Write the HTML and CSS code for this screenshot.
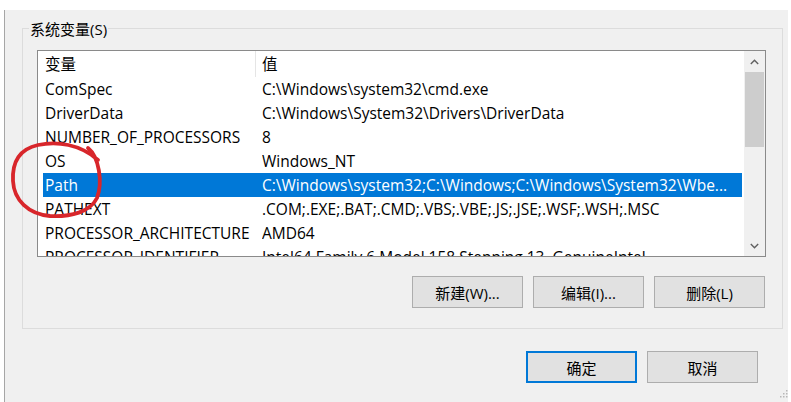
FILE: index.html
```html
<!DOCTYPE html>
<html lang="zh-CN">
<head>
<meta charset="utf-8">
<title>系统变量</title>
<link rel="stylesheet" href="styles.css">
</head>
<body>
<div class="window">
  <div class="group">
    <div class="group-title">系统变量(S)</div>
    <div class="list">
      <div class="list-main">
        <div class="list-head"><div class="c1">变量</div><div class="c2">值</div></div>
        <div class="row"><div class="c1">ComSpec</div><div class="c2">C:\Windows\system32\cmd.exe</div></div>
        <div class="row"><div class="c1">DriverData</div><div class="c2">C:\Windows\System32\Drivers\DriverData</div></div>
        <div class="row"><div class="c1">NUMBER_OF_PROCESSORS</div><div class="c2">8</div></div>
        <div class="row"><div class="c1">OS</div><div class="c2">Windows_NT</div></div>
        <div class="row sel"><div class="c1">Path</div><div class="c2">C:\Windows\system32;C:\Windows;C:\Windows\System32\Wbe...</div></div>
        <div class="row"><div class="c1">PATHEXT</div><div class="c2">.COM;.EXE;.BAT;.CMD;.VBS;.VBE;.JS;.JSE;.WSF;.WSH;.MSC</div></div>
        <div class="row"><div class="c1">PROCESSOR_ARCHITECTURE</div><div class="c2">AMD64</div></div>
        <div class="row"><div class="c1">PROCESSOR_IDENTIFIER</div><div class="c2">Intel64 Family 6 Model 158 Stepping 13, GenuineIntel</div></div>
      </div>
      <div class="scrollbar">
        <div class="sb-btn">
          <svg width="9" height="6" viewBox="0 0 9 6"><polyline points="0.8,5 4.5,1.3 8.2,5" fill="none" stroke="#606060" stroke-width="1.4"/></svg>
        </div>
        <div class="sb-track"><div class="sb-thumb"></div></div>
        <div class="sb-btn">
          <svg width="9" height="6" viewBox="0 0 9 6"><polyline points="0.8,1 4.5,4.7 8.2,1" fill="none" stroke="#606060" stroke-width="1.4"/></svg>
        </div>
      </div>
    </div>
    <div class="group-buttons">
      <button class="btn">新建(W)...</button>
      <button class="btn">编辑(I)...</button>
      <button class="btn">删除(L)</button>
    </div>
  </div>
  <div class="dialog-buttons">
    <button class="btn btn-default">确定</button>
    <button class="btn">取消</button>
  </div>
  <svg class="grip" width="8" height="8" viewBox="0 0 8 8">
    <rect x="6" y="0" width="1.5" height="1.5" fill="#b8b8b8"/>
    <rect x="3" y="3" width="1.5" height="1.5" fill="#b8b8b8"/>
    <rect x="6" y="3" width="1.5" height="1.5" fill="#b8b8b8"/>
    <rect x="0" y="6" width="1.5" height="1.5" fill="#b8b8b8"/>
    <rect x="3" y="6" width="1.5" height="1.5" fill="#b8b8b8"/>
    <rect x="6" y="6" width="1.5" height="1.5" fill="#b8b8b8"/>
  </svg>
</div>
<svg class="annotation" width="120" height="230" viewBox="0 0 120 230">
  <path d="M88 148 C99 157, 103 182, 97 198 C90 212, 71 217, 50 216 C28 214, 14 200, 13 181 C12 162, 20 149, 38 145 C57 141, 80 144, 98 160" fill="none" stroke="#d8262b" stroke-width="3.8" stroke-linecap="round" stroke-linejoin="round"/>
</svg>
</body>
</html>
```
FILE: styles.css
```css
html, body {
  margin: 0;
  padding: 0;
}
body {
  position: relative;
  width: 791px;
  height: 402px;
  overflow: hidden;
  background: #ffffff;
  font-family: "Open Sans", "Noto Sans CJK SC", sans-serif;
  font-size: 15px;
  color: #000;
}
.window {
  position: relative;
  margin: 10px 0 0 4px;
  width: 784px;
  height: 392px;
  box-sizing: border-box;
  border-left: 1px solid #a6a6a6;
  background: #f0f0f0;
  padding: 18px 0 0 17px;
}
.group {
  width: 761px;
  box-sizing: border-box;
  border: 1px solid #dcdcdc;
  padding: 0 16px 20px 14px;
}
.group-title {
  width: max-content;
  margin: -10px 0 0 -8px;
  padding: 0 1px;
  background: #f0f0f0;
  line-height: 20px;
  font-size: 15px;
}
.list {
  margin-top: 11px;
  width: 729px;
  height: 207px;
  box-sizing: border-box;
  border: 1px solid #8a8a8a;
  background: #ffffff;
  display: flex;
  overflow: hidden;
  font-size: 15.5px;
}
.list-main {
  flex: 1;
  min-width: 0;
  overflow: hidden;
  padding: 0 2px 0 5px;
}
.list-head {
  display: flex;
  height: 26px;
}
.list-head .c1 {
  width: 213px;
  box-sizing: border-box;
  padding-left: 2px;
  border-right: 1px solid #e5e5e5;
  line-height: 27px;
}
.list-head .c2 {
  padding-left: 6px;
  line-height: 27px;
}
.row {
  display: flex;
  height: 24px;
  line-height: 25px;
  white-space: nowrap;
}
.row .c1 {
  width: 219px;
  flex: none;
  box-sizing: border-box;
  padding-left: 2px;
  overflow: hidden;
}
.row .c2 {
  flex: 1;
  min-width: 0;
  overflow: hidden;
}
.row.sel {
  background: #0078d7;
  color: #ffffff;
}
.scrollbar {
  width: 21px;
  flex: none;
  background: #f0f0f0;
  display: flex;
  flex-direction: column;
}
.sb-btn {
  height: 21px;
  display: flex;
  align-items: center;
  justify-content: center;
}
.sb-track {
  flex: 1;
}
.sb-thumb {
  margin: 0 1px;
  height: 75px;
  background: #cdcdcd;
}
.group-buttons {
  display: flex;
  justify-content: flex-end;
  gap: 10px;
  margin: 19px 1px 0 0;
}
.btn {
  width: 111px;
  height: 32px;
  box-sizing: border-box;
  margin: 0;
  padding: 0;
  border: 1px solid #adadad;
  background: #e1e1e1;
  font-family: "Open Sans", "Noto Sans CJK SC", sans-serif;
  font-size: 15px;
  color: #000;
}
.btn-default {
  border: 2px solid #0078d7;
}
.dialog-buttons {
  display: flex;
  justify-content: flex-end;
  gap: 10px;
  margin: 22px 30px 0 0;
}
.grip {
  position: absolute;
  right: 0;
  bottom: 4px;
}
.annotation {
  position: absolute;
  left: 0;
  top: 0;
  pointer-events: none;
}
```
